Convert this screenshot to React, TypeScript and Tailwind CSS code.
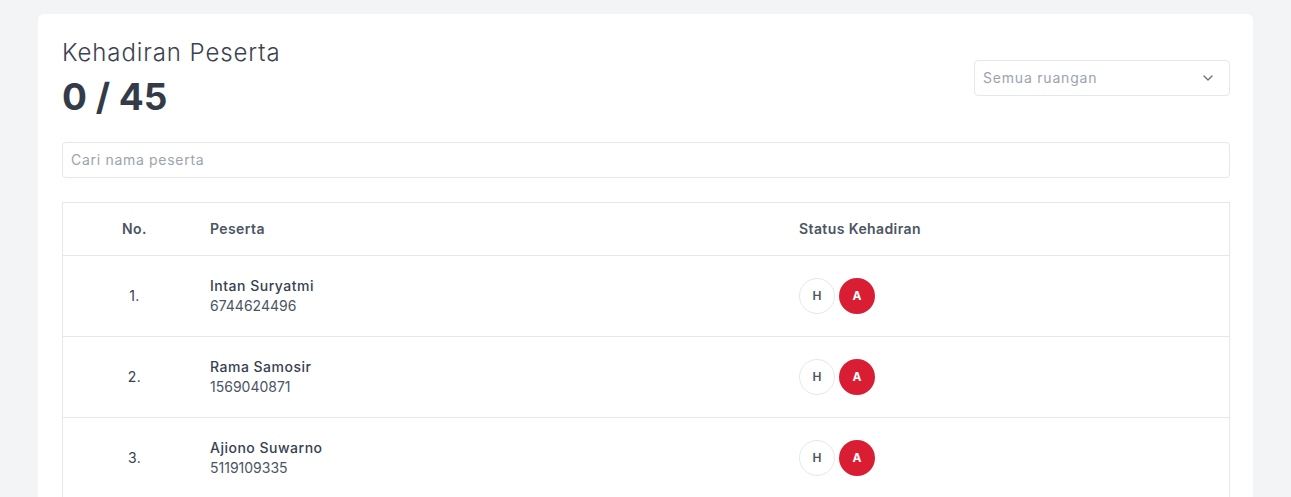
import { ChevronDown } from 'lucide-react';

const participants = [
	{ id: 1, name: 'Intan Suryatmi', number: '6744624496' },
	{ id: 2, name: 'Rama Samosir', number: '1569040871' },
	{ id: 3, name: 'Ajiono Suwarno', number: '5119109335' },
];

const cell = 'border-b border-[#e5e7eb] flex items-center';

function App() {
	return (
		<div
			className="min-h-screen bg-[#f3f4f6] px-[38px] pt-[14px] text-[#374151]"
			style={{ fontFamily: 'Inter, "Noto Sans", sans-serif' }}
		>
			<div className="rounded-md bg-white p-6 pr-[23px]">
				<div className="flex items-center justify-between">
					<div>
						<h2 className="text-[24px] leading-[30px] font-light tracking-[0.9px] text-[#3b4250]">
							Kehadiran Peserta
						</h2>
						<div className="mt-[7px] text-[37px] leading-[44px] font-bold text-[#343b48]">
							0 / 45
						</div>
					</div>
					<div className="-mt-px flex h-9 w-64 items-center justify-between rounded border border-[#e5e7eb] pl-2 pr-[13px] text-sm tracking-[0.8px] text-[#9ca3af]">
						<span>Semua ruangan</span>
						<ChevronDown className="h-4 w-4 text-[#6b7280]" strokeWidth={2} />
					</div>
				</div>

				<div className="mt-[23px] flex h-9 items-center rounded border border-[#e5e7eb] px-2 text-sm tracking-[0.7px] text-[#9ca3af]">
					Cari nama peserta
				</div>

				<div className="mt-6 border-x border-t border-[#e5e7eb]">
					<div className="grid grid-cols-[147px_589px_1fr] text-sm font-semibold tracking-[0.4px] text-[#4b5563]">
						<div className={clsxCell('h-[53px] justify-center pr-1')}>No.</div>
						<div className={clsxCell('h-[53px]')}>Peserta</div>
						<div className={clsxCell('h-[53px]')}>Status Kehadiran</div>
						{participants.map((p, i) => (
							<Row key={p.id} index={i + 1} name={p.name} number={p.number} />
						))}
					</div>
				</div>
			</div>
		</div>
	);
}

function clsxCell(extra: string) {
	return `${cell} ${extra}`;
}

function Row({ index, name, number }: { index: number; name: string; number: string }) {
	return (
		<>
			<div className={clsxCell('h-[81px] justify-center pr-1 font-normal text-[#374151]')}>
				{index}.
			</div>
			<div className={clsxCell('h-[81px]')}>
				<div className="leading-5">
					<div className="font-medium tracking-[0.5px] text-[#374151]">{name}</div>
					<div className="font-normal tracking-normal text-[#4b5563]">{number}</div>
				</div>
			</div>
			<div className={clsxCell('h-[81px] gap-1')}>
				<div className="flex h-9 w-9 items-center justify-center rounded-full border border-[#e5e7eb] bg-white text-xs font-semibold tracking-normal text-[#4b5563]">
					H
				</div>
				<div className="flex h-9 w-9 items-center justify-center rounded-full bg-[#d91e33] text-xs font-bold tracking-normal text-white">
					A
				</div>
			</div>
		</>
	);
}

export default App;
